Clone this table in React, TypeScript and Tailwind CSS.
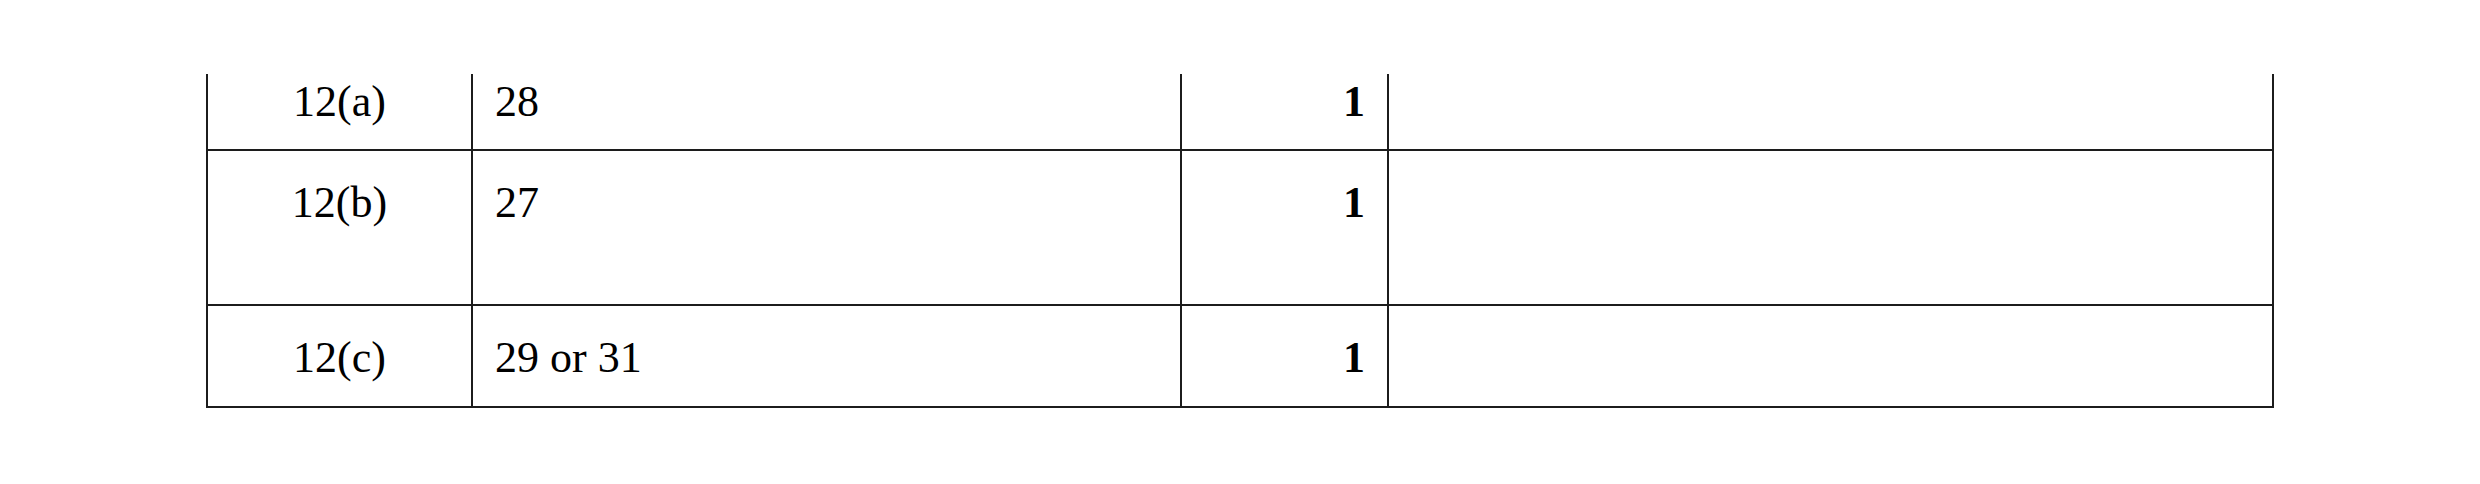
const rows = [
  { part: '12(a)', answer: '28', mark: '1', height: 'h-[77px]', pad: 'pt-[6px]' },
  { part: '12(b)', answer: '27', mark: '1', height: 'h-[155px]', pad: 'pt-[30px]' },
  { part: '12(c)', answer: '29 or 31', mark: '1', height: 'h-[102px]', pad: 'pt-[30px]' },
];

export default function App() {
  return (
    <div className="w-[2480px] h-[484px] bg-white pt-[74px] font-['Liberation_Serif','Times_New_Roman',serif] text-[44px] leading-[44px] text-black">
      <div className="ml-[206px] w-[2068px] border-l-2 border-[#1c1c1c]">
        {rows.map((row) => (
          <div key={row.part} className={`flex border-b-2 border-[#1c1c1c] ${row.height}`}>
            <div className={`w-[265px] shrink-0 border-r-2 border-[#1c1c1c] text-center ${row.pad}`}>
              {row.part}
            </div>
            <div className={`w-[709px] shrink-0 border-r-2 border-[#1c1c1c] pl-[22px] ${row.pad}`}>
              {row.answer}
            </div>
            <div className={`w-[207px] shrink-0 border-r-2 border-[#1c1c1c] pr-[22px] text-right font-bold ${row.pad}`}>
              {row.mark}
            </div>
            <div className="w-[885px] shrink-0 border-r-2 border-[#1c1c1c]" />
          </div>
        ))}
      </div>
    </div>
  );
}
